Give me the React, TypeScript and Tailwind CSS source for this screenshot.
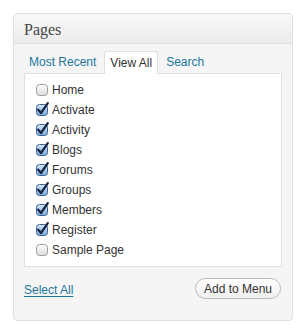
import React from "react";

const items: { label: string; checked: boolean }[] = [
  { label: "Home", checked: false },
  { label: "Activate", checked: true },
  { label: "Activity", checked: true },
  { label: "Blogs", checked: true },
  { label: "Forums", checked: true },
  { label: "Groups", checked: true },
  { label: "Members", checked: true },
  { label: "Register", checked: true },
  { label: "Sample Page", checked: false },
];

function Box({ checked, id }: { checked: boolean; id: number }) {
  if (!checked) {
    return (
      <svg width="14" height="14" viewBox="0 0 14 14" className="shrink-0">
        <defs>
          <linearGradient id={`u${id}`} x1="0" y1="0" x2="0" y2="1">
            <stop offset="0" stopColor="#ffffff" />
            <stop offset="1" stopColor="#dcdcdc" />
          </linearGradient>
        </defs>
        <rect x="1.5" y="1.5" width="11" height="11" rx="3" fill={`url(#u${id})`} stroke="#9c9c9c" strokeWidth="1" />
      </svg>
    );
  }
  return (
    <svg width="14" height="14" viewBox="0 0 14 14" className="shrink-0 overflow-visible">
      <defs>
        <linearGradient id={`c${id}`} x1="0" y1="0" x2="0" y2="1">
          <stop offset="0" stopColor="#d8e8f8" />
          <stop offset="1" stopColor="#76a9dc" />
        </linearGradient>
      </defs>
      <rect x="1.5" y="1.5" width="11" height="11" rx="3" fill={`url(#c${id})`} stroke="#3b628f" strokeWidth="1" />
      <path d="M3.2 6.6 L6 10 L12.8 0.2" fill="none" stroke="#14213f" strokeWidth="2.2" strokeLinecap="round" strokeLinejoin="round" />
    </svg>
  );
}

export default function App() {
  return (
    <div className="w-[305px] h-[334px] bg-white pt-[13px] pl-[13px]" style={{ fontFamily: '"Liberation Sans", Arial, sans-serif' }}>
      <div className="w-[280px] border border-[#dfdfdf] rounded-[4px] bg-[#f5f5f5] overflow-hidden">
        <div className="h-[30px] border-b border-[#dfdfdf] bg-gradient-to-b from-[#f9f9f9] to-[#ececec] pl-[10px] flex items-center">
          <span className="text-[16px] text-[#464646] leading-none pt-[2px]" style={{ fontFamily: '"Liberation Serif", Georgia, serif' }}>
            Pages
          </span>
        </div>
        <div className="px-[10px] pt-[7px] pb-[21px]">
          <div className="flex gap-[2px] -ml-[1px] text-[12px] leading-none">
            <div className="h-[22px] px-[5px] border border-transparent flex items-center text-[#21759b]">Most Recent</div>
            <div className="h-[23px] -mb-[1px] px-[5px] border border-b-0 border-[#dfdfdf] rounded-t-[3px] bg-white flex items-center pb-[1px] text-[#333] relative z-10">
              View All
            </div>
            <div className="h-[22px] px-[5px] border border-transparent flex items-center text-[#21759b]">Search</div>
          </div>
          <div className="border border-[#dfdfdf] bg-white py-[6px] pl-[10px]">
            {items.map((it, i) => (
              <div key={it.label} className="h-[20px] flex items-center gap-[3px] text-[12px] text-[#333]">
                <Box checked={it.checked} id={i} />
                <span>{it.label}</span>
              </div>
            ))}
          </div>
          <div className="flex items-center justify-between mt-[11px]">
            <a className="text-[12px] text-[#21759b] underline underline-offset-2 mt-[3px]">Select All</a>
            <button className="h-[21px] px-[8px] mr-[1px] rounded-full border border-[#bbb] bg-gradient-to-b from-white to-[#efefef] text-[12px] text-[#333] leading-none">
              Add to Menu
            </button>
          </div>
        </div>
      </div>
    </div>
  );
}
